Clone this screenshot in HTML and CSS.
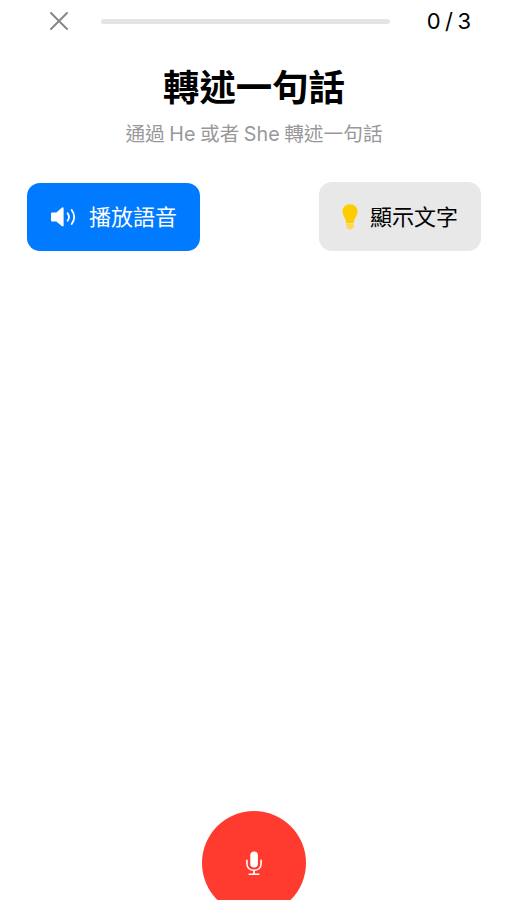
FILE: index.html
```
<!DOCTYPE html>
<html lang="zh-Hant">
<head>
    <meta charset="UTF-8">
    <meta name="viewport" content="width=device-width, initial-scale=1.0">
    <title>轉述一句話</title>
    <link rel="stylesheet" href="styles.css">
</head>
<body>
    <header class="topbar">
        <button class="close-btn" aria-label="關閉">
            <svg width="18" height="18" viewBox="0 0 18 18">
                <path d="M1 1L17 17M17 1L1 17" fill="none" stroke="#858585" stroke-width="1.9" stroke-linecap="round"/>
            </svg>
        </button>
        <div class="progress"></div>
        <span class="counter">0 / 3</span>
    </header>

    <main class="content">
        <h1>轉述一句話</h1>
        <p class="subtitle">通過 He 或者 She 轉述一句話</p>

        <div class="actions">
            <button class="btn play-btn">
                <svg width="27" height="22" viewBox="0 0 27 22">
                    <path d="M2.2 6.5H6.3L11.7 1.7Q13.6 0.6 13.6 2.5V19.5Q13.6 21.2 11.7 20.1L6.3 15.5H2.2Q1 15.5 1 14.3V7.7Q1 6.5 2.2 6.5Z" fill="#fff"/>
                    <path d="M17.6 7.2Q20.4 11 17.6 14.8M21.7 4Q26.7 11 21.7 18" fill="none" stroke="#fff" stroke-width="1.8" stroke-linecap="round"/>
                </svg>
                <span>播放語音</span>
            </button>
            <button class="btn text-btn">
                <svg width="16" height="26" viewBox="0 0 16 26">
                    <path d="M8 0.3C3.8 0.3 0.5 3.4 0.5 7.5C0.5 12.2 3.9 13.4 4.2 19H11.8C12.1 13.4 15.5 12.2 15.5 7.5C15.5 3.4 12.2 0.3 8 0.3Z" fill="#ffcc00"/>
                    <path d="M4.2 19.3H11.8V22.6Q11.8 23.7 10.7 23.9Q10 25.7 8 25.7T5.3 23.9Q4.2 23.7 4.2 22.6Z" fill="#ffd65c"/>
                </svg>
                <span>顯示文字</span>
            </button>
        </div>
    </main>

    <footer class="recorder">
        <button class="mic-btn" aria-label="錄音">
            <svg width="16" height="25" viewBox="0 0 16 25">
                <rect x="4.3" y="0.5" width="7.6" height="16" rx="3.8" fill="#fff"/>
                <path d="M0.9 9.3V12.4C0.9 16.5 3.8 19.2 8 19.2S15.1 16.5 15.1 12.4V9.3M8 19.2V23M3.2 23.2H12.8" fill="none" stroke="#fff" stroke-width="1.6" stroke-linecap="round"/>
            </svg>
        </button>
    </footer>
</body>
</html>
```
FILE: styles.css
```
* {
    margin: 0;
    padding: 0;
    box-sizing: border-box;
}

body {
    font-family: 'Inter', 'Noto Sans CJK TC', sans-serif;
    background-color: #fff;
    color: #000;
    display: flex;
    flex-direction: column;
    height: 900px;
    overflow: hidden;
}

button {
    border: none;
    background: none;
    font-family: inherit;
    cursor: pointer;
}

svg {
    display: block;
    flex-shrink: 0;
}

.topbar {
    display: flex;
    align-items: center;
    height: 42px;
    padding: 0 36px 0 50px;
    flex-shrink: 0;
}

.progress {
    width: 289px;
    height: 5px;
    margin-left: 33px;
    border-radius: 3px;
    background-color: #e4e4e5;
    flex-shrink: 0;
}

.counter {
    margin-left: auto;
    font-size: 22px;
    line-height: 42px;
    word-spacing: -1.8px;
    white-space: nowrap;
}

.content {
    flex: 1;
    padding: 0 26px 0 27px;
}

h1 {
    margin-top: 20px;
    font-size: 36.4px;
    line-height: 52px;
    font-weight: 700;
    text-align: center;
}

.subtitle {
    margin-top: 5px;
    font-size: 19.7px;
    line-height: 30px;
    word-spacing: -1px;
    color: #98989a;
    text-align: center;
    white-space: nowrap;
}

.actions {
    display: flex;
    justify-content: space-between;
    align-items: flex-end;
    margin-top: 33px;
}

.btn {
    display: flex;
    align-items: center;
    height: 69px;
    border-radius: 13px;
    font-size: 22px;
    line-height: 32px;
    white-space: nowrap;
}

.play-btn {
    width: 173px;
    height: 68px;
    padding-left: 23px;
    gap: 12px;
    background-color: #007aff;
    color: #fff;
}

.text-btn {
    width: 162px;
    padding-left: 23px;
    gap: 12px;
    background-color: #e8e8e8;
    color: #000;
}

.recorder {
    display: flex;
    justify-content: center;
    height: 89px;
    padding-left: 1px;
    flex-shrink: 0;
}

.mic-btn {
    display: flex;
    align-items: center;
    justify-content: center;
    width: 104px;
    height: 104px;
    border-radius: 50%;
    background-color: #ff3b30;
}
```
